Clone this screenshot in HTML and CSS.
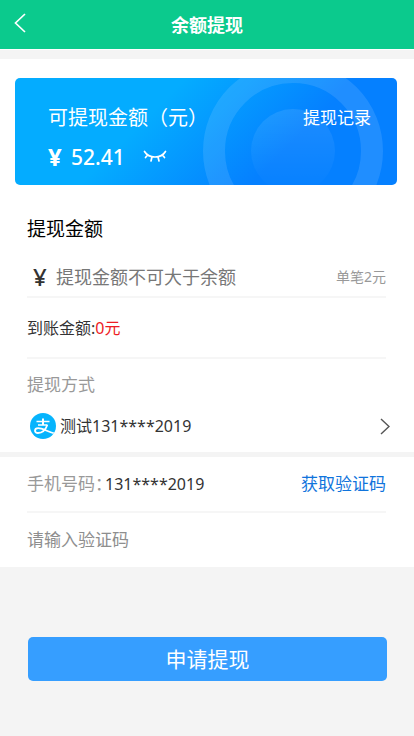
FILE: index.html
```html
<!DOCTYPE html>
<html lang="zh-CN">
<head>
<meta charset="utf-8">
<meta name="viewport" content="width=device-width, initial-scale=1">
<title>余额提现</title>
<link rel="stylesheet" href="styles.css">
</head>
<body>
<header class="topbar">
  <a class="back" href="#" aria-label="返回">
    <svg width="12" height="20" viewBox="0 0 12 20" fill="none" stroke="currentColor" stroke-width="1.7"><path d="M11 1 1.500 10 11 19"/></svg>
  </a>
  <h1 class="topbar-title">余额提现</h1>
</header>
<main>
  <section class="panel">
    <div class="card">
      <svg class="rings" width="180" height="180" viewBox="0 0 180 180" aria-hidden="true">
        <defs><linearGradient id="disc" x1="0" y1="0" x2="0" y2="1"><stop offset="0" stop-color="#fff" stop-opacity=".1"/><stop offset="1" stop-color="#fff" stop-opacity="0"/></linearGradient></defs>
        <circle cx="90" cy="90" r="79" fill="none" stroke="#fff" stroke-opacity=".11" stroke-width="22"/>
        <circle cx="90" cy="90" r="42" fill="url(#disc)"/>
      </svg>
      <div class="card-info">
        <p class="card-label">可提现金额（元）</p>
        <p class="card-amount"><span class="card-yen">¥</span><span>52.41</span>
          <button class="eye" type="button" aria-label="隐藏金额">
            <svg width="24" height="14" viewBox="0 0 24 14" fill="none" stroke="currentColor" stroke-width="1.7" stroke-linecap="round"><path d="M1.500 1.500C6 8.800 18 8.800 22.500 1.500M4.500 5 2.500 7.500M9 7 8 11M15 7 16 11M19.500 5 21.500 7.500"/></svg>
          </button>
        </p>
      </div>
      <a class="card-link" href="#">提现记录</a>
    </div>
    <div class="content">
      <h2 class="heading"><label for="amount">提现金额</label></h2>
      <div class="row amount-row">
        <span class="yen">¥</span>
        <input class="field amount" id="amount" type="text" inputmode="decimal" placeholder="提现金额不可大于余额">
        <span class="fee">单笔2元</span>
      </div>
      <div class="row arrival">到账金额:<span class="red">0元</span></div>
      <p class="method-label">提现方式</p>
      <a class="method" href="#">
        <svg width="26" height="26" viewBox="0 0 26 26" aria-hidden="true">
          <defs><clipPath id="round"><circle cx="13" cy="13" r="13"/></clipPath></defs>
          <circle cx="13" cy="13" r="13" fill="#06b4fd"/>
          <g clip-path="url(#round)" fill="none" stroke="#fff"><path stroke-width="1.500" d="M6.500 8.500H19.500M8 12H17.500"/><path stroke-width="2" d="M13 5.500V12"/><path stroke-width="1.800" d="M17.300 12C15.500 17 12 20 8 20 3.800 20 4.200 15.200 8.200 15.200 12.500 15.200 17 18.500 26 21"/></g>
        </svg>
        <span class="method-name">测试131****2019</span>
        <svg width="10" height="17" viewBox="0 0 10 17" fill="none" stroke="#555" stroke-width="1.400" aria-hidden="true"><path d="M1 1 9 8.500 1 16"/></svg>
      </a>
    </div>
  </section>
  <section class="panel verify">
    <div class="content">
      <div class="row phone-row">
        <span class="muted">手机号码：</span>
        <span class="phone">131****2019</span>
        <button class="get-code" type="button">获取验证码</button>
      </div>
      <div class="code-row">
        <input class="field" type="text" inputmode="numeric" aria-label="验证码" placeholder="请输入验证码">
      </div>
    </div>
  </section>
  <div class="actions"><button class="submit" type="submit">申请提现</button></div>
</main>
</body>
</html>
```

FILE: styles.css
```css
* { box-sizing: border-box; }
body {
  margin: 0;
  background: #f4f4f4;
  color: #333;
  font: 17px/26px "Noto Sans", "Noto Sans CJK SC", sans-serif;
}
h1, h2, p { margin: 0; }
a { color: inherit; text-decoration: none; }
button, input { font: inherit; border: 0; padding: 0; background: none; }
svg { display: block; flex: none; }

.topbar {
  display: grid;
  grid-template-columns: 40px 1fr 40px;
  align-items: center;
  height: 50px;
  background: #0bca8d;
  border-bottom: 1px solid #fff;
  color: #fff;
}
.back { padding: 0 14px 4px; }
.topbar-title { font-size: 18px; line-height: 26px; text-align: center; }

.panel { background: #fff; }
main { padding-top: 9px; }
.panel:first-child { padding: 19px 0 6px; }
.content { padding: 0 28px 0 27px; }

.card {
  position: relative;
  display: flex;
  justify-content: space-between;
  align-items: flex-start;
  margin: 0 17px 0 15px;
  padding: 27px 26px 14px 33px;
  overflow: hidden;
  border-radius: 5px;
  background: linear-gradient(135deg, #04acff 35%, #0580ff 70%);
  color: #fff;
}
.rings { position: absolute; right: 14px; top: -17px; }
.card-info, .card-link { position: relative; }
.card-label { font-size: 20px; }
.card-amount {
  display: flex;
  align-items: center;
  margin-top: 12px;
  font-size: 21px;
  line-height: 28px;
  font-weight: 500;
}
.card-yen { width: 23px; font-size: 24px; font-weight: 700; }
.eye { margin-left: 18px; color: inherit; }

.heading { margin: 30px 0 15px; font-size: 19px; line-height: 28px; font-weight: 400; color: #000; }
.row { display: flex; align-items: center; border-bottom: 2px solid #f6f6f6; }
.amount-row { height: 40px; }
.yen { width: 29px; padding-left: 6px; font-size: 24px; font-weight: 500; }
.field { flex: 1; width: 100%; min-width: 0; color: #333; outline: 0; }
.field::placeholder { color: #8e8e8e; opacity: 1; }
.amount { font-size: 18px; }
.amount::placeholder { color: #777; }
.fee { font-size: 14px; color: #999; }
.arrival { height: 61px; font-size: 16px; }
.red { color: #ed1c24; }
.method-label { margin: 13px 0 8px; color: #999; }
.method { display: flex; align-items: center; height: 40px; padding-left: 3px; margin-right: -4px; }
.method-name { flex: 1; padding-left: 4px; font-size: 16px; }

.verify { margin-top: 5px; }
.phone-row { height: 56px; }
.muted { width: 78px; white-space: nowrap; color: #999; }
.phone { flex: 1; font-size: 16px; }
.get-code { color: #1074dc; }
.code-row { display: flex; align-items: center; height: 54px; }

.actions { padding: 70px 27px 40px 28px; }
.submit {
  width: 100%;
  height: 44px;
  border-radius: 5px;
  background: #369eff;
  color: #fff;
  font-size: 21px;
}
```
